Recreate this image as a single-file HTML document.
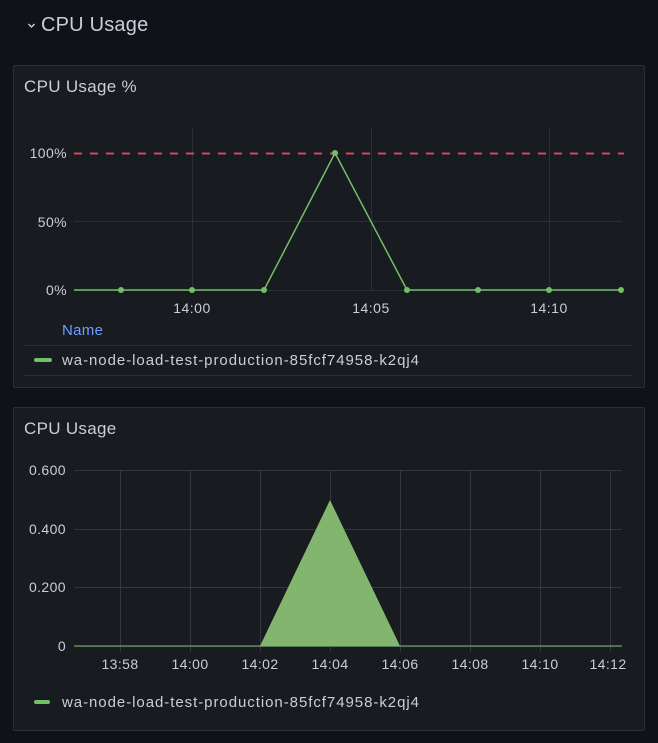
<!DOCTYPE html>
<html><head><style>
body{margin:0;width:658px;height:743px;background:#111217;font-family:"Liberation Sans",sans-serif;overflow:hidden;position:relative}
.p{position:absolute;left:13px;width:630px;background:#181b1f;border:1px solid #2c2e33;border-radius:2px}
.t{position:absolute;left:10px;font-size:17px;color:#ccccdc;letter-spacing:0.3px}
svg{position:absolute;left:0;top:0}
</style></head><body>
<div style="position:absolute;left:41px;top:14px;color:#ccccdc;font-size:20px;white-space:nowrap;letter-spacing:0.2px">CPU Usage</div>
<div class="p" style="top:65px;height:321px"><div class="t" style="top:11px">CPU Usage %</div></div>
<div class="p" style="top:407px;height:322px"><div class="t" style="top:11px">CPU Usage</div></div>
<svg width="658" height="743" font-family="Liberation Sans" font-size="14" fill="#ccccdc">
<polyline points="28.5,24 31.5,27 34.5,24" fill="none" stroke="#ccccdc" stroke-width="1.4"/>
<g stroke="#2c2e33" stroke-width="1">
<line x1="74" x2="622" y1="221.5" y2="221.5"/><line x1="74" x2="622" y1="290.5" y2="290.5"/>
<line x1="192.5" x2="192.5" y1="127" y2="290"/><line x1="371.5" x2="371.5" y1="127" y2="290"/><line x1="549.5" x2="549.5" y1="127" y2="290"/>
<line x1="24" x2="633" y1="345.5" y2="345.5"/><line x1="24" x2="633" y1="375.5" y2="375.5"/>
</g>
<line x1="74" x2="624" y1="153.5" y2="153.5" stroke="#d44a55" stroke-width="2" stroke-dasharray="8,8"/>
<polyline points="74,290 264,290 335,153 407,290 622,290" fill="none" stroke="#73bf69" stroke-width="1.5"/>
<g fill="#73bf69"><circle cx="121" cy="290" r="3"/><circle cx="192" cy="290" r="3"/><circle cx="264" cy="290" r="3"/><circle cx="335" cy="153" r="3"/><circle cx="407" cy="290" r="3"/><circle cx="478" cy="290" r="3"/><circle cx="549" cy="290" r="3"/><circle cx="621" cy="290" r="3"/></g>
<g text-anchor="end" letter-spacing="0.4"><text x="67" y="158">100%</text><text x="67" y="227">50%</text><text x="67" y="295">0%</text></g>
<g text-anchor="middle" letter-spacing="0.5"><text x="192" y="313">14:00</text><text x="371" y="313">14:05</text><text x="549" y="313">14:10</text></g>
<text x="62" y="335" fill="#6e9fff" font-size="15" letter-spacing="0.3">Name</text>
<rect x="34" y="358" width="18" height="4" rx="2" fill="#73bf69"/>
<text x="62" y="365" font-size="15" letter-spacing="0.95">wa-node-load-test-production-85fcf74958-k2qj4</text>
<g stroke="#35373c" stroke-width="1">
<line x1="74" x2="622" y1="470.5" y2="470.5"/><line x1="74" x2="622" y1="529.5" y2="529.5"/><line x1="74" x2="622" y1="587.5" y2="587.5"/><line x1="74" x2="622" y1="646.5" y2="646.5"/>
<line x1="120.5" x2="120.5" y1="470" y2="652"/><line x1="190.5" x2="190.5" y1="470" y2="652"/><line x1="260.5" x2="260.5" y1="470" y2="652"/><line x1="330.5" x2="330.5" y1="470" y2="652"/><line x1="400.5" x2="400.5" y1="470" y2="652"/><line x1="470.5" x2="470.5" y1="470" y2="652"/><line x1="540.5" x2="540.5" y1="470" y2="652"/><line x1="610.5" x2="610.5" y1="470" y2="652"/>
</g>
<polygon points="260,646 330,500 400,646" fill="#82b56e"/>
<line x1="74" x2="622" y1="646" y2="646" stroke="#73bf69" stroke-width="1"/>
<g text-anchor="end" letter-spacing="0.4"><text x="66" y="475">0.600</text><text x="66" y="534">0.400</text><text x="66" y="592">0.200</text><text x="66" y="651">0</text></g>
<g text-anchor="middle" letter-spacing="0.4"><text x="120" y="669">13:58</text><text x="190" y="669">14:00</text><text x="260" y="669">14:02</text><text x="330" y="669">14:04</text><text x="400" y="669">14:06</text><text x="470" y="669">14:08</text><text x="540" y="669">14:10</text><text x="608" y="669">14:12</text></g>
<rect x="34" y="700" width="16" height="4" rx="2" fill="#73bf69"/>
<text x="62" y="707" font-size="15" letter-spacing="0.95">wa-node-load-test-production-85fcf74958-k2qj4</text>
</svg>
</body></html>
